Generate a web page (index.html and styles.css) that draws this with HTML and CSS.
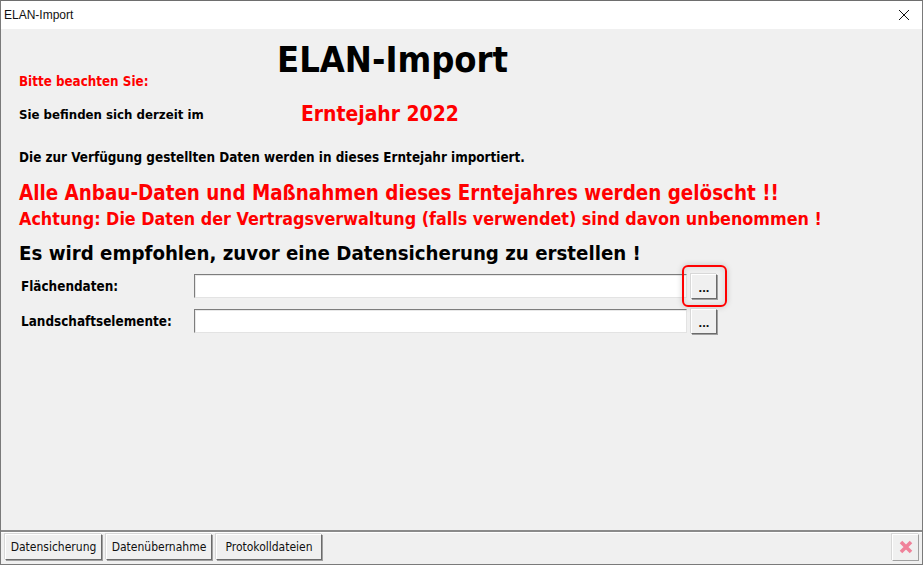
FILE: index.html
```html
<!DOCTYPE html>
<html lang="de">
<head>
  <meta charset="UTF-8" />
  <title>ELAN-Import</title>
  <link rel="stylesheet" href="styles.css">
</head>
<body>
  <div class="window">
    <div class="titlebar">
      <span class="title-text">ELAN-Import</span>
      <svg class="close-icon" width="12" height="12" viewBox="0 0 12 12">
        <path d="M1 1L11 11M11 1L1 11" stroke="#111" stroke-width="1" fill="none"/>
      </svg>
    </div>

    <div class="content">
      <div class="head-row">
        <span class="note">Bitte beachten Sie:</span>
        <h1>ELAN-Import</h1>
      </div>
      <div class="year-row">
        <span class="small-text">Sie befinden sich derzeit im</span>
        <span class="year">Erntejahr 2022</span>
      </div>
      <p class="small-text info">Die zur Verfügung gestellten Daten werden in dieses Erntejahr importiert.</p>
      <p class="warn-big">Alle Anbau-Daten und Maßnahmen dieses Erntejahres werden gelöscht !!</p>
      <p class="warn-small">Achtung: Die Daten der Vertragsverwaltung (falls verwendet) sind davon unbenommen !</p>
      <p class="advice">Es wird empfohlen, zuvor eine Datensicherung zu erstellen !</p>

      <div class="field-row first">
        <label class="field-label">Flächendaten:</label>
        <input class="field-input" type="text">
        <div class="browse-wrap">
          <button class="browse-btn">...</button>
          <div class="highlight"></div>
        </div>
      </div>
      <div class="field-row">
        <label class="field-label">Landschaftselemente:</label>
        <input class="field-input" type="text">
        <div class="browse-wrap">
          <button class="browse-btn">...</button>
        </div>
      </div>
    </div>

    <div class="footer">
      <button class="foot-btn btn-a">Datensicherung</button>
      <button class="foot-btn btn-b">Datenübernahme</button>
      <button class="foot-btn btn-c">Protokolldateien</button>
      <button class="foot-close">
        <svg width="14" height="14" viewBox="0 0 14 14">
          <path d="M2 2L12 12M12 2L2 12" stroke="#f0829a" stroke-width="3.6" fill="none"/>
        </svg>
      </button>
    </div>
  </div>
</body>
</html>
```

FILE: styles.css
```css
* {
  box-sizing: border-box;
}

html, body {
  margin: 0;
  height: 100%;
}

body {
  font-family: "DejaVu Sans", Verdana, sans-serif;
  background: #f0f0f0;
  overflow: hidden;
}

.window {
  width: 923px;
  height: 565px;
  display: flex;
  flex-direction: column;
  border: 1px solid #7a7a7a;
  border-top-color: #6e6e6e;
}

.titlebar {
  height: 28px;
  background: #fff;
  display: flex;
  align-items: center;
  justify-content: space-between;
  padding: 0 12px 0 3px;
}

.title-text {
  font-family: "Liberation Sans", Arial, sans-serif;
  font-size: 12px;
  color: #111;
}

.content {
  flex: 1;
  padding: 0 0 0 18px;
}

.head-row {
  height: 60px;
  display: flex;
  align-items: flex-end;
}

.note {
  width: 258px;
  font-size: 13.3px;
  font-weight: bold;
  font-stretch: condensed;
  color: #f00;
  line-height: 14px;
}

h1 {
  margin: 0 0 9px 0;
  font-size: 36px;
  line-height: 40px;
  font-weight: bold;
  font-stretch: condensed;
  color: #000;
}

.year-row {
  display: flex;
  align-items: center;
  margin-top: 11px;
  height: 28px;
}

.small-text {
  font-size: 13.4px;
  font-weight: bold;
  font-stretch: condensed;
  color: #000;
}

.year-row .small-text {
  width: 282px;
  font-size: 13.1px;
}

.year {
  font-size: 20.9px;
  font-weight: bold;
  font-stretch: condensed;
  color: #f00;
}

.info {
  margin: 22px 0 0 0;
  line-height: 16px;
}

.warn-big {
  margin: 14px 0 0 0;
  font-size: 20.4px;
  line-height: 26px;
  font-weight: bold;
  font-stretch: condensed;
  color: #f00;
}

.warn-small {
  margin: 2px 0 0 0;
  font-size: 17.8px;
  line-height: 22px;
  font-weight: bold;
  font-stretch: condensed;
  color: #f00;
}

.advice {
  margin: 10px 0 0 0;
  font-size: 20.25px;
  line-height: 26px;
  font-weight: bold;
  font-stretch: condensed;
  color: #000;
}

.field-row {
  display: flex;
  align-items: center;
  margin-top: 11px;
  height: 24px;
  padding-left: 2px;
}

.field-row.first {
  margin-top: 8px;
}

.field-label {
  width: 173px;
  font-size: 13.4px;
  font-weight: bold;
  font-stretch: condensed;
  color: #000;
}

.field-input {
  width: 493px;
  height: 24px;
  padding: 0;
  background: #fff;
  border: 1px solid #e3e3e3;
  border-top: 1px solid #7d7d7d;
  border-left: 1px solid #7d7d7d;
  box-shadow: inset 1px 1px 0 #e8e8e8;
  outline: none;
}

.browse-wrap {
  position: relative;
  margin-left: 4px;
}

.browse-btn {
  display: block;
  width: 26px;
  height: 25px;
  padding: 3px 0 0;
  font-family: "Liberation Sans", Arial, sans-serif;
  font-size: 13px;
  font-weight: bold;
  color: #111;
  background: #f0f0f0;
  border: 1px solid;
  border-color: #fff #6b6b6b #6b6b6b #fff;
  box-shadow: 1px 1px 0 #a0a0a0, -1px -1px 0 #d8d8d8;
}

.highlight {
  position: absolute;
  left: -9px;
  top: -9px;
  width: 45px;
  height: 42px;
  border: 2px solid #f00;
  border-radius: 6px;
  box-shadow: 0 0 6px rgba(0, 0, 0, 0.18), inset 0 0 6px rgba(0, 0, 0, 0.12);
}

.footer {
  height: 34px;
  border-top: 2px solid #8a8a8a;
  display: flex;
  align-items: center;
  gap: 4px;
  padding: 0 0 2px 4px;
  box-shadow: inset 0 1px 0 #fff;
}

.foot-btn {
  height: 26px;
  padding: 0;
  font-family: "DejaVu Sans", Verdana, sans-serif;
  font-stretch: condensed;
  font-size: 12px;
  color: #111;
  background: #f0f0f0;
  border: 1px solid;
  border-color: #fff #6b6b6b #6b6b6b #fff;
  box-shadow: 1px 1px 0 #a0a0a0, -1px -1px 0 #d8d8d8;
}

.btn-a {
  width: 97px;
}

.btn-b {
  width: 106px;
}

.btn-c {
  width: 106px;
}

.foot-close {
  width: 27px;
  height: 27px;
  margin-left: auto;
  margin-right: 3px;
  padding: 0;
  display: flex;
  align-items: center;
  justify-content: center;
  background: #f0f0f0;
  border: 1px solid;
  border-color: #fff #a0a0a0 #a0a0a0 #fff;
  box-shadow: -1px -1px 0 #d8d8d8;
}
```
